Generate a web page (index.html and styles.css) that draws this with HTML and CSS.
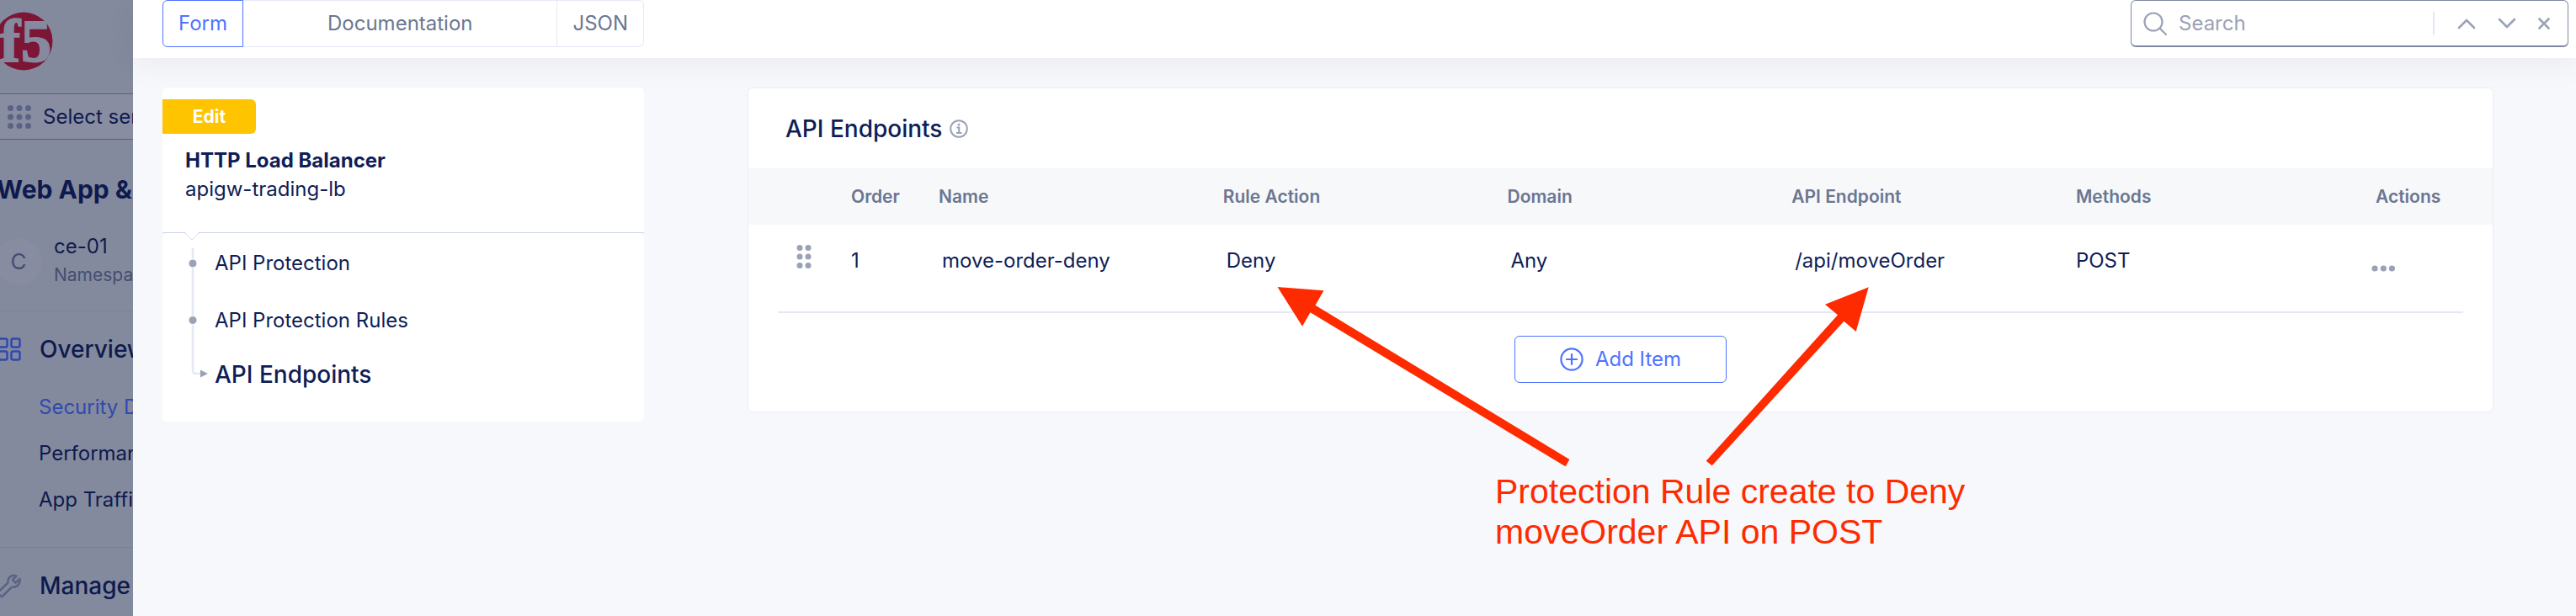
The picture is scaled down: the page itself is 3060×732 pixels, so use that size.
FILE: index.html
```html
<!DOCTYPE html>
<html lang="en">
<head>
<meta charset="utf-8">
<title>API Endpoints</title>
<link rel="stylesheet" href="styles.css">
</head>
<body>
<div class="app">
  <aside class="sidebar">
    <div class="brand">
      <svg class="logo" viewBox="0 0 70 70" role="img" aria-label="f5">
        <circle cx="35" cy="35" r="34.5" fill="#7d1636"/>
        <g fill="#858a9f" stroke="#858a9f" stroke-width="2" font-family="Liberation Serif, serif" font-weight="bold">
          <text x="7" y="59" font-size="72">f</text>
          <text x="32" y="59" font-size="72">5</text>
        </g>
      </svg>
    </div>
    <button class="services" type="button">
      <svg class="grid-dots" viewBox="0 0 28 28" fill="#5a6383" aria-hidden="true">
        <circle cx="3.5" cy="3.5" r="3.5"/><circle cx="14" cy="3.5" r="3.5"/><circle cx="24.500" cy="3.5" r="3.5"/>
        <circle cx="3.5" cy="14" r="3.5"/><circle cx="14" cy="14" r="3.5"/><circle cx="24.500" cy="14" r="3.5"/>
        <circle cx="3.5" cy="24.500" r="3.5"/><circle cx="14" cy="24.500" r="3.5"/><circle cx="24.500" cy="24.500" r="3.5"/>
      </svg>
      <span>Select service</span>
    </button>
    <h2 class="product">Web App &amp;</h2>
    <div class="namespace">
      <span class="avatar">C</span>
      <div>
        <div class="ns-name">ce-01</div>
        <div class="ns-label">Namespace</div>
      </div>
    </div>
    <nav class="nav">
      <section class="nav-group">
        <h3 class="nav-head">
          <svg class="nav-icon" viewBox="0 0 28 28" fill="none" stroke="#2f49ae" stroke-width="2.500" aria-hidden="true">
            <rect x="1.500" y="1.500" width="10" height="10" rx="2"/><rect x="16.500" y="1.500" width="10" height="10" rx="2"/>
            <rect x="1.500" y="16.500" width="10" height="10" rx="2"/><rect x="16.500" y="16.500" width="10" height="10" rx="2"/>
          </svg>Overview</h3>
        <a class="nav-link active" href="#security">Security Dashboard</a>
        <a class="nav-link" href="#performance">Performance</a>
        <a class="nav-link" href="#traffic">App Traffic</a>
      </section>
      <section class="nav-group">
        <h3 class="nav-head">
          <svg class="nav-icon" viewBox="0 0 28 28" fill="none" stroke="#5a6383" stroke-width="2.500" stroke-linejoin="round" aria-hidden="true">
            <path d="M22.500 2.500c-4-2-9.500.500-10 5.500 0 1.500 0 2.500-.500 3L1.500 21c-1 1-1 2 0 3l2.500 2.500 1.500.500L15.500 17c1-1.500 2-1.500 3.500-1.500 5 0 8.500-4.500 7.500-9.500l-5 4.500-3.500-3.500z"/>
          </svg>Manage</h3>
      </section>
    </nav>
  </aside>

  <main class="drawer">
    <header class="topbar">
      <div class="tabs">
        <button class="tab selected" type="button">Form</button>
        <button class="tab tab-wide" type="button">Documentation</button>
        <button class="tab" type="button">JSON</button>
      </div>
      <div class="search">
        <svg class="search-icon" viewBox="0 0 28 28" fill="none" stroke="#9aa2b5" stroke-width="2.200" stroke-linecap="round" aria-hidden="true"><circle cx="12" cy="12" r="10.500"/><path d="M19.500 19.500 27 27"/></svg>
        <input class="search-input" type="search" placeholder="Search" aria-label="Search">
        <div class="search-tools">
          <button class="tool" type="button" aria-label="Previous"><svg viewBox="0 0 22 22" aria-hidden="true"><path d="M2 16l9-9 9 9"/></svg></button>
          <button class="tool" type="button" aria-label="Next"><svg viewBox="0 0 22 22" aria-hidden="true"><path d="M2 6l9 9 9-9"/></svg></button>
          <button class="tool tool-close" type="button" aria-label="Close"><svg viewBox="0 0 14 14" aria-hidden="true"><path d="M1.500 1.500l11 11M12.500 1.500l-11 11"/></svg></button>
        </div>
      </div>
    </header>

    <div class="content">
      <section class="outline">
        <div class="outline-head">
          <span class="badge">Edit</span>
          <h2 class="resource-type">HTTP Load Balancer</h2>
          <p class="resource-name">apigw-trading-lb</p>
        </div>
        <div class="outline-body">
          <svg class="notch" viewBox="0 0 16 12" aria-hidden="true"><path d="M0 0h16L8 9z" fill="#fff"/><path d="M0 1l8 8 8-8" fill="none" stroke="#d8dcec"/></svg>
          <svg class="track" viewBox="0 0 32 156" fill="none" aria-hidden="true">
            <path d="M11 0v145q0 4 4 4h7" stroke="#e4e8f3" stroke-width="2.500"/>
            <g fill="#9aa2b5" stroke="#fff"><circle cx="11" cy="18" r="5"/><circle cx="11" cy="85.500" r="5"/></g>
            <path d="M20 144.500l9 4.500-9 4.500z" fill="#9aa2b5"/>
          </svg>
          <a class="step" href="#protection">API Protection</a>
          <a class="step" href="#rules">API Protection Rules</a>
          <a class="step current" href="#endpoints">API Endpoints</a>
        </div>
      </section>

      <section class="panel">
        <div class="panel-title">
          <h1 class="heading">API Endpoints</h1>
          <svg class="info" viewBox="0 0 22 22" fill="none" stroke="#9aa2b5" stroke-width="2" aria-hidden="true"><circle cx="11" cy="11" r="9.800"/><path d="M8.500 9.500h2.800V16M8 16h6.500"/><circle cx="11" cy="6.200" r="1.400" fill="#9aa2b5" stroke="none"/></svg>
        </div>
        <table class="grid">
          <thead>
            <tr>
              <th class="col-drag"></th>
              <th class="col-order">Order</th>
              <th class="col-data">Name</th>
              <th class="col-data">Rule Action</th>
              <th class="col-data">Domain</th>
              <th class="col-data">API Endpoint</th>
              <th>Methods</th>
              <th class="col-actions">Actions</th>
            </tr>
          </thead>
          <tbody>
            <tr>
              <td class="drag-cell"><svg class="drag" viewBox="0 0 18 28" fill="#9aa2b5" aria-hidden="true"><circle cx="4" cy="3.500" r="3.500"/><circle cx="14" cy="3.500" r="3.500"/><circle cx="4" cy="14" r="3.500"/><circle cx="14" cy="14" r="3.500"/><circle cx="4" cy="24.500" r="3.500"/><circle cx="14" cy="24.500" r="3.500"/></svg></td>
              <td>1</td>
              <td class="inset">move-order-deny</td>
              <td class="inset">Deny</td>
              <td class="inset">Any</td>
              <td class="inset">/api/moveOrder</td>
              <td>POST</td>
              <td class="menu-cell"><button class="more" type="button" aria-label="Row actions"><svg viewBox="0 0 28 8" fill="#9aa2b5" aria-hidden="true"><circle cx="4" cy="4" r="3.600"/><circle cx="14.300" cy="4" r="3.600"/><circle cx="24.400" cy="4" r="3.600"/></svg></button></td>
            </tr>
          </tbody>
        </table>
        <div class="panel-foot">
          <button class="add" type="button">
            <svg class="add-icon" viewBox="0 0 28 28" fill="none" stroke="#4f73ff" stroke-width="2.200" stroke-linecap="round" aria-hidden="true"><circle cx="14" cy="14" r="12.600"/><path d="M14 8v12M8 14h12"/></svg>
            Add Item
          </button>
        </div>
      </section>
    </div>

    <div class="annotation">
      <svg class="arrows" viewBox="1517 341 704 214" fill="#ff2b00" aria-hidden="true">
        <path d="M1517.500 341l55 4.300-10 17.400 302 183.300-5 8.300-303-183-9.500 16.400z"/>
        <path d="M2219.700 341.300l-15 52.700-14.300-12.300-156.700 171.600-7-5.600L2183 374.300l-15-12.600z"/>
      </svg>
      <p class="note">Protection Rule create to Deny<br>moveOrder API on POST</p>
    </div>
  </main>
</div>
</body>
</html>
```

FILE: styles.css
```css
* { box-sizing: border-box; }

body {
  margin: 0;
  font-family: Inter, "Liberation Sans", sans-serif;
  font-size: 24px;
  line-height: 32px;
  color: #0f1e57;
}

h1, h2, h3, p { margin: 0; }
button { font: inherit; background: none; border: 0; padding: 0; }
a { color: inherit; text-decoration: none; }
svg { display: block; flex: none; }

.app {
  display: flex;
  height: 100vh;
  overflow: hidden;
}

/* Dimmed navigation behind the drawer */
.sidebar {
  width: 158px;
  flex: none;
  overflow: hidden;
  white-space: nowrap;
  background: #848a9e;
  color: #0e1a4d;
}
.brand { height: 111px; padding-top: 14px; }
.logo { width: 70px; height: 70px; margin-left: -7px; overflow: visible; }
.services {
  display: flex;
  align-items: center;
  gap: 14px;
  width: 100%;
  height: 55px;
  padding-left: 9px;
  border-top: 1px solid #576080;
  border-bottom: 1px solid #576080;
  background: #898da2;
  color: inherit;
}
.grid-dots { width: 28px; height: 28px; }
.product {
  margin: 39px 0 0 -4px;
  font-size: 30px;
  line-height: 40px;
  font-weight: 700;
}
.namespace {
  display: flex;
  align-items: center;
  gap: 14px;
  margin: 36px 0 0 -6px;
  height: 60px;
}
.avatar {
  width: 56px;
  height: 56px;
  flex: none;
  border-radius: 50%;
  background: #878ca0;
  color: #454e70;
  font-size: 26px;
  line-height: 56px;
  text-align: center;
}
.ns-label { font-size: 21px; line-height: 36px; color: #454e70; }
.nav { margin-top: 28px; }
.nav-group {
  border-top: 1px solid #7a8096;
  padding: 25px 0 40px;
}
.nav-head {
  display: flex;
  align-items: center;
  gap: 22px;
  margin: 0 0 33px -3px;
  font-size: 28px;
  line-height: 40px;
  font-weight: 500;
}
.nav-icon { width: 28px; height: 28px; }
.nav-link { display: block; margin-bottom: 23px; padding-left: 46px; }
.nav-link:last-child { margin-bottom: 0; }
.nav-link.active { color: #2f49ae; }

/* Drawer */
.drawer {
  position: relative;
  flex: 1;
  min-width: 0;
  background: #f7f8fb;
}
.topbar {
  position: relative;
  display: flex;
  justify-content: space-between;
  padding: 0 9px 13px 35px;
  background: #fff;
  box-shadow: 0 10px 36px rgba(0, 0, 0, 0.05);
}
.tabs { display: flex; width: 572px; height: 56px; }
.tab {
  padding: 0 18px;
  border: 1px solid #e6e9f5;
  border-left: 0;
  color: #6b7690;
}
.tab:last-child { border-radius: 0 6px 6px 0; }
.tab-wide { flex: 1; }
.tab.selected {
  border: 1px solid #4f73ff;
  border-radius: 6px 0 0 6px;
  color: #4f73ff;
}
.search {
  display: flex;
  align-items: center;
  width: 520px;
  height: 56px;
  padding: 0 8px 0 14px;
  border: 1px solid #7f89a2;
  border-bottom-width: 2px;
  border-radius: 6px;
}
.search-icon { width: 28px; height: 28px; }
.search-input {
  flex: 1;
  min-width: 0;
  padding: 0 14px;
  border: 0;
  outline: 0;
  background: none;
  font: inherit;
  color: inherit;
}
.search-input::placeholder { color: #9aa2b5; opacity: 1; }
.search-tools {
  display: flex;
  align-items: center;
  gap: 26px;
  height: 28px;
  padding: 0 13px 0 27px;
  border-left: 2px solid #e4e8f3;
}
.tool svg {
  width: 22px;
  height: 22px;
  fill: none;
  stroke: #9aa2b5;
  stroke-width: 2.6;
  stroke-linecap: round;
  stroke-linejoin: round;
}
.tool-close svg { width: 14px; height: 14px; }

.content {
  display: flex;
  align-items: flex-start;
  gap: 123px;
  padding: 35px 98px 0 35px;
}

/* Outline card */
.outline {
  position: relative;
  width: 572px;
  flex: none;
}
.outline-head {
  height: 173px;
  padding: 14px 0 0;
  background: #fff;
  border-bottom: 1px solid #cdd3e8;
  border-radius: 6px 6px 0 0;
}
.badge {
  display: block;
  width: 111px;
  margin-bottom: 15px;
  background: #ffc400;
  border-radius: 0 6px 6px 0;
  color: #fff;
  font-size: 21px;
  line-height: 41px;
  font-weight: 700;
  text-align: center;
}
.resource-type, .resource-name {
  padding-left: 27px;
  font-size: 24px;
  line-height: 34px;
}
.resource-type { font-weight: 700; }
.outline-body {
  position: relative;
  display: flex;
  flex-direction: column;
  gap: 36px;
  padding: 20px 0 40px 62px;
  background: #fff;
  border-radius: 6px;
}
.step.current { font-size: 28px; line-height: 32px; font-weight: 500; margin-top: -4px; }
.notch {
  position: absolute;
  left: 27px;
  top: -1px;
  width: 16px;
  height: 12px;
}
.track {
  position: absolute;
  left: 25px;
  top: 18px;
  width: 32px;
  height: 156px;
}

/* Endpoints panel */
.panel {
  position: relative;
  flex: 1;
  min-width: 0;
  background: #fff;
  border: 1px solid #e9ecf5;
  border-radius: 6px;
}
.panel-title {
  display: flex;
  align-items: center;
  gap: 9px;
  height: 95px;
  padding: 0 44px;
}
.heading { font-size: 28px; line-height: 36px; font-weight: 500; }
.info { width: 22px; height: 22px; }
.grid {
  width: 100%;
  table-layout: fixed;
  border-collapse: collapse;
  text-align: left;
}
.grid th {
  height: 67px;
  padding: 0;
  background: #f7f8fa;
  color: #6b7690;
  font-size: 21px;
  font-weight: 600;
}
.grid td { height: 103px; padding: 27px 0 0; vertical-align: top; }
.grid td.inset { padding-left: 4px; }
.col-drag { width: 122px; }
.col-order { width: 104px; }
.col-data { width: 16.3%; }
.col-actions { width: 139px; }
.grid td.drag-cell { padding: 24px 0 0 57px; }
.drag { width: 18px; height: 28px; }
.grid td.menu-cell { vertical-align: middle; padding: 0; }
.more { display: block; margin-left: -5px; }
.more svg { width: 28px; height: 8px; }
.panel-foot {
  display: flex;
  justify-content: center;
  margin: 0 35px;
  padding: 27px 0 34px;
  border-top: 2px solid #e4e8f3;
}
.add {
  display: flex;
  align-items: center;
  justify-content: center;
  gap: 14px;
  width: 252px;
  height: 56px;
  border: 1px solid #4f73ff;
  border-radius: 6px;
  color: #4f73ff;
}
.add-icon { width: 28px; height: 28px; }

/* Callout drawn over the drawer */
.annotation {
  position: absolute;
  left: 1359px;
  top: 341px;
  pointer-events: none;
}
.arrows { width: 704px; height: 214px; }
.note {
  padding: 5px 0 0 259px;
  color: #ff2b00;
  font-family: "Liberation Sans", Arial, sans-serif;
  font-size: 41px;
  line-height: 48px;
  white-space: nowrap;
}
```
